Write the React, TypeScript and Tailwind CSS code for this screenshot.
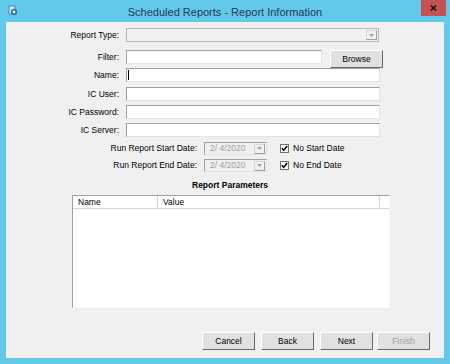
import React from 'react';

// Scheduled Reports wizard page, classic WinForms look.

const FONT = "font-['Liberation_Sans',Arial,sans-serif]";

function DropArrow({ disabled = true }: { disabled?: boolean }) {
  return (
    <span className="flex h-[10px] w-[11px] items-center justify-center border border-t-[#d8d8d8] border-l-[#d8d8d8] border-b-[#a0a0a0] border-r-[#a0a0a0] bg-[#f0f0f0]">
      <svg width="5" height="3" viewBox="0 0 5 3" aria-hidden>
        <path d="M0 0h5L2.5 3z" fill={disabled ? '#a0a0a0' : '#000'} />
      </svg>
    </span>
  );
}

function TextBox({ w, caret = false }: { w: number; caret?: boolean }) {
  return (
    <div
      className="flex h-[14px] items-center border border-t-[#a0a0a0] border-l-[#a0a0a0] border-b-[#e3e3e3] border-r-[#e3e3e3] bg-white pl-[1px]"
      style={{ width: w }}
    >
      {caret ? <span className="h-[10px] w-px bg-black" /> : null}
    </div>
  );
}

function Row({ label, children, top }: { label: string; children: React.ReactNode; top: string }) {
  return (
    <div className={`flex items-start ${top}`}>
      <div className="h-[14px] w-[113px] text-right leading-[14px] text-[#000]">{label}</div>
      <div className="ml-[7px] flex items-start">{children}</div>
    </div>
  );
}

function DateRow({ label, date, check, top }: { label: string; date: string; check: string; top: string }) {
  return (
    <div className={`flex items-center ${top}`}>
      <div className="w-[191px] text-right leading-[13px]">{label}</div>
      <div className="ml-[7px] flex h-[13px] w-[63px] items-center justify-between border border-t-[#a0a0a0] border-l-[#a0a0a0] border-b-[#e3e3e3] border-r-[#e3e3e3] bg-[#f0f0f0] pl-[5px] pr-[1px] text-[#a0a0a0]">
        <span className="leading-[11px]">{date}</span>
        <DropArrow />
      </div>
      <div className="ml-[13px] flex items-center">
        <span className="flex h-[9px] w-[9px] items-center justify-center border border-[#707070] bg-white">
          <svg width="7" height="7" viewBox="0 0 7 7" aria-hidden>
            <path d="M0.8 3.3l1.9 2L6.2 1" stroke="#000" strokeWidth="1.5" fill="none" />
          </svg>
        </span>
        <span className="ml-[4px] leading-[13px]">{check}</span>
      </div>
    </div>
  );
}

function Btn({ label, disabled = false, ml }: { label: string; disabled?: boolean; ml: string }) {
  return (
    <button
      type="button"
      className={`${ml} h-[18px] w-[53px] border border-t-white border-l-white border-b-[#696969] border-r-[#696969] bg-[#e1e1e1] leading-[16px] ${disabled ? 'text-[#a0a0a0]' : 'text-black'}`}
    >
      {label}
    </button>
  );
}

export default function App() {
  return (
    <div className={`${FONT} relative flex h-[364px] w-[450px] flex-col bg-[#63c9e8] text-[8.5px] text-black`}>
      {/* title bar */}
      <div className="relative flex h-[22px] items-center justify-center">
        <span className="absolute left-[8px] top-[5px] h-[11px] w-[10px]">
          <svg width="10" height="11" viewBox="0 0 10 11" aria-hidden>
            <rect x="1" y="1" width="6" height="8" fill="#dfe9f7" stroke="#2f6fc4" strokeWidth="0.8" />
            <circle cx="6" cy="7" r="3.2" fill="#2f6fc4" />
            <circle cx="6" cy="7" r="1.4" fill="#ffffff" />
          </svg>
        </span>
        <span className="pt-[2px] text-[11px] text-[#1e3a5c]">Scheduled Reports - Report Information</span>
        <span className="absolute left-[421px] top-0 flex h-[16px] w-[25px] items-center justify-center bg-[#c75050]">
          <svg width="7" height="6" viewBox="0 0 7 6" aria-hidden>
            <path d="M0.8 0.5l5.4 5M6.2 0.5L0.8 5.5" stroke="#1a1a1a" strokeWidth="1.7" />
          </svg>
        </span>
      </div>

      {/* client area */}
      <div className="mx-[6px] mb-[6px] flex flex-1 flex-col bg-[#f0f0f0]">
        <Row label="Report Type:" top="mt-[6px]">
          <div className="flex h-[14px] w-[253px] items-center justify-end border border-[#b8b8b8] bg-[#f0f0f0] pr-[1px]">
            <DropArrow />
          </div>
        </Row>

        <Row label="Filter:" top="mt-[8px]">
          <TextBox w={196} />
          <Btn label="Browse" ml="ml-[8px]" />
        </Row>

        <Row label="Name:" top="mt-0">
          <TextBox w={254} caret />
        </Row>
        <Row label="IC User:" top="mt-[5px]">
          <TextBox w={254} />
        </Row>
        <Row label="IC Password:" top="mt-[4px]">
          <TextBox w={254} />
        </Row>
        <Row label="IC Server:" top="mt-[4px]">
          <TextBox w={254} />
        </Row>

        <DateRow label="Run Report Start Date:" date="2/ 4/2020" check="No Start Date" top="mt-[5px]" />
        <DateRow label="Run Report End Date:" date="2/ 4/2020" check="No End Date" top="mt-[4px]" />

        <div className="mt-[8px] pl-[186px] text-[8.5px] font-bold leading-[11px]">Report Parameters</div>

        <div className="ml-[66px] mt-[4px] flex h-[113px] w-[318px] flex-col border border-t-[#a0a0a0] border-l-[#a0a0a0] border-b-[#f7f7f7] border-r-[#f7f7f7] bg-white">
          <div className="flex h-[13px] border-b border-[#d5d5d5]">
            <div className="w-[85px] border-r border-[#d5d5d5] pl-[5px] leading-[12px]">Name</div>
            <div className="w-[222px] border-r border-[#d5d5d5] pl-[5px] leading-[12px]">Value</div>
            <div className="flex-1" />
          </div>
          <div className="flex-1" />
        </div>

        <div className="mt-[24px] flex">
          <Btn label="Cancel" ml="ml-[196px]" />
          <Btn label="Back" ml="ml-[6px]" />
          <Btn label="Next" ml="ml-[6px]" />
          <Btn label="Finish" disabled ml="ml-[4px]" />
        </div>
      </div>
    </div>
  );
}
